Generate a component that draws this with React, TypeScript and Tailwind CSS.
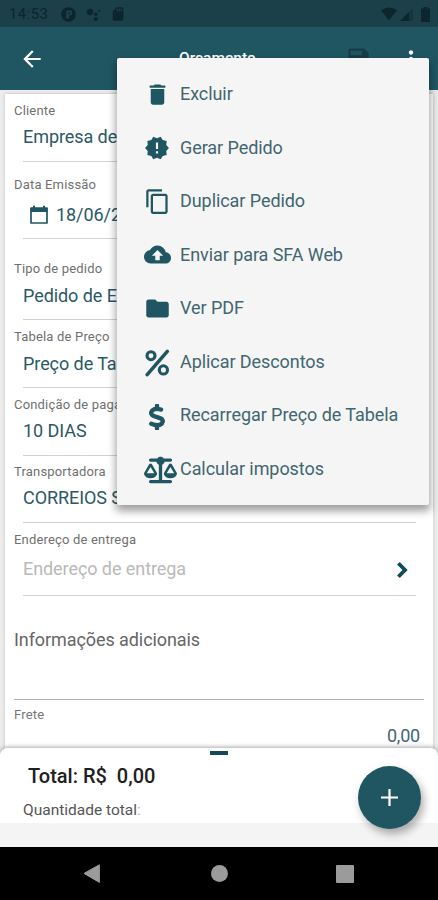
import type { ReactNode } from "react";
import {
  MdArrowBack,
  MdCloudUpload,
  MdContentCopy,
  MdDelete,
  MdFolder,
  MdMoreVert,
  MdNewReleases,
  MdSave,
  MdSdCard,
} from "react-icons/md";
import { FaDollarSign, FaScaleBalanced } from "react-icons/fa6";

function StatusBar() {
  return (
    <div className="flex h-[27px] items-center bg-[#1b4049] pt-px text-[#0d252c]">
      <span className="ml-[9px] w-[40px] text-[15px] leading-none tracking-[0.4px]">14:53</span>
      <svg className="ml-3 size-[15px]" viewBox="0 0 16 16">
        <circle cx="8" cy="8" r="7.8" fill="currentColor" />
        <path d="M5.5 3.8h6.3v5H8.6v3.4H5.5Z" fill="#1b4049" />
        <path d="M7.4 6.2h2.5v1.3H7.4Z" fill="currentColor" />
      </svg>
      <svg className="ml-[10px] size-[15px]" viewBox="0 0 15 15" fill="currentColor">
        <circle cx="4" cy="5" r="3.3" />
        <circle cx="9.8" cy="7.2" r="1.8" />
        <circle cx="9.8" cy="12" r="2.1" />
        <circle cx="13.3" cy="3.8" r="1" />
      </svg>
      <MdSdCard className="ml-[9px] size-4" />
      <svg className="ml-auto h-[14px] w-[16px]" viewBox="0 0 16 14" fill="currentColor">
        <path d="M0 3.2Q8-2.4 16 3.2L8 13.6Z" />
      </svg>
      <svg className="ml-[3px] h-[13px] w-[13px]" viewBox="0 0 13 13" fill="currentColor">
        <path d="M0 13 13 0V13Z" opacity=".35" />
        <path d="M0 13 9 4V13Z" />
      </svg>
      <svg className="ml-2 mr-[8px] h-[15px] w-[9px]" viewBox="0 0 9 15" fill="currentColor">
        <path d="M2.5 0h4v1.5H9V15H0V1.5h2.5Z" />
      </svg>
    </div>
  );
}

function Header() {
  return (
    <div className="flex h-[63px] items-center bg-[#205662] text-white">
      <MdArrowBack className="ml-[19px] size-[26px]" />
      <span className="ml-[134px] pt-px text-[15.5px] leading-none font-medium">Orçamento</span>
      <MdSave className="ml-auto size-[27px] text-[#163d47]" />
      <MdMoreVert className="ml-[26px] mr-[14px] size-[26px]" />
    </div>
  );
}

interface FieldProps {
  label: string;
  frame: string;
  valueClass?: string;
  children: ReactNode;
}

function Field({ label, frame, valueClass = "h-8 text-[#2b5865]", children }: FieldProps) {
  return (
    <div className={`flex flex-col ${frame}`}>
      <span className="h-5 pl-[9px] text-[13px] leading-5 tracking-[0.18px] text-[#707070]">{label}</span>
      <div className={`ml-[18px] flex items-center whitespace-nowrap text-[18px] tracking-[-0.07px] ${valueClass}`}>
        {children}
      </div>
      <div className="mt-auto ml-[18px] mr-[17px] h-px bg-[#d2d2d2]" />
    </div>
  );
}

function CalendarIcon() {
  return (
    <svg className="mt-px ml-[6px] mr-[7px] h-[20px] w-[20px]" viewBox="0 0 20 20">
      <path d="M2 3h16v15H2Z" fill="none" stroke="#205662" strokeWidth="1.7" strokeLinejoin="round" />
      <path d="M1.5 3h17v4h-17ZM4 .8h2V4H4ZM14 .8h2V4h-2Z" fill="#205662" />
    </svg>
  );
}

function PercentIcon() {
  return (
    <svg className="mt-[2px] size-[28px]" viewBox="0 0 28 28" fill="none" stroke="currentColor" strokeWidth="3.1">
      <circle cx="8" cy="6.7" r="4" />
      <circle cx="20.4" cy="20.9" r="4.1" />
      <path d="M24.3 2.3 4.2 25.6" strokeLinecap="round" strokeWidth="3.5" />
    </svg>
  );
}

function MenuItem({ icon, children }: { icon: ReactNode; children: string }) {
  return (
    <div className="flex h-[53.5px] items-center text-[#205662]">
      <div className="ml-[23px] mr-[6px] flex w-[34px] justify-center">{icon}</div>
      <span className="text-[18px] leading-none tracking-[-0.07px] whitespace-nowrap text-[#426670]">{children}</span>
    </div>
  );
}

function OptionsMenu() {
  return (
    <div className="absolute top-[58px] left-[117px] h-[447px] w-[312px] rounded-[2px] bg-[#f5f5f5] pt-[9.6px] shadow-[0_5px_9px_1px_rgba(0,0,0,0.38)]">
      <MenuItem icon={<MdDelete className="size-[27px]" />}>Excluir</MenuItem>
      <MenuItem icon={<MdNewReleases className="size-[26px]" />}>Gerar Pedido</MenuItem>
      <MenuItem icon={<MdContentCopy className="size-[27px]" />}>Duplicar Pedido</MenuItem>
      <MenuItem icon={<MdCloudUpload className="size-[27px]" />}>Enviar para SFA Web</MenuItem>
      <MenuItem icon={<MdFolder className="size-[27px]" />}>Ver PDF</MenuItem>
      <MenuItem icon={<PercentIcon />}>Aplicar Descontos</MenuItem>
      <MenuItem icon={<FaDollarSign className="mt-[3px] size-[26px] [stroke-width:22px]" />}>
        Recarregar Preço de Tabela
      </MenuItem>
      <MenuItem icon={<FaScaleBalanced className="mt-[2px] ml-[6px] h-[28px] w-[33px] shrink-0" />}>
        Calcular impostos
      </MenuItem>
    </div>
  );
}

function OrderForm() {
  return (
    <div className="h-[658px] overflow-hidden bg-[#ececec] px-[5px] pt-1">
      <div className="h-[654px] bg-white shadow-[0_0_3px_rgba(0,0,0,0.2)]">
        <Field label="Cliente" frame="h-[68px] pt-[7px]" valueClass="h-[31px] text-[#2b5865]">
          Empresa de
        </Field>
        <Field label="Data Emissão" frame="h-[77px] pt-[13px]" valueClass="h-[38px] text-[#2b5865]">
          <CalendarIcon />
          18/06/2021
        </Field>
        <Field label="Tipo de pedido" frame="h-[81px] pt-5">Pedido de E</Field>
        <Field label="Tabela de Preço" frame="h-[68px] pt-[7px]">Preço de Tabela</Field>
        <Field label="Condição de pagamento" frame="h-[68px] pt-[7px]" valueClass="h-[30px] text-[#2b5865]">
          10 DIAS
        </Field>
        <Field label="Transportadora" frame="h-[67px] pt-[6px]" valueClass="h-[31px] text-[#2b5865]">
          CORREIOS S
        </Field>
        <Field label="Endereço de entrega" frame="h-[73px] pt-[7px]" valueClass="h-[38px] text-[#b9b9b9]">
          <span className="pb-[2px]">Endereço de entrega</span>
          <svg className="mt-[2px] ml-auto mr-[25px] h-[18px] w-[12px]" viewBox="0 0 12 18">
            <path d="M2.4 2.2 9 9l-6.6 6.8" fill="none" stroke="#124a57" strokeWidth="3.8" />
          </svg>
        </Field>
        <div className="mx-[9px] flex h-[104px] items-center border-b border-[#b2b2b2] pb-[16px] text-[18px] tracking-[-0.08px] text-[#666666]">
          Informações adicionais
        </div>
        <div className="pt-[5px] pl-[9px] pr-[13px]">
          <div className="h-5 text-[13px] leading-5 tracking-[0.18px] text-[#777777]">Frete</div>
          <div className="h-5 pt-px text-right text-[18px] leading-5 tracking-[-0.2px] text-[#426670]">0,00</div>
        </div>
      </div>
    </div>
  );
}

function TotalsPanel() {
  return (
    <div className="relative h-[99px] rounded-t-[8px] bg-[#f4f4f4] shadow-[0_-1px_4px_rgba(0,0,0,0.35)]">
      <div className="flex h-[75px] flex-col rounded-t-[8px] bg-white">
        <div className="mt-[3px] h-1 w-[18px] self-center bg-[#124a57]" />
        <div className="mt-[9px] ml-7 h-6 text-[20px] leading-6 font-medium whitespace-pre text-[#202020]">
          {"Total: R$  0,00"}
        </div>
        <div className="mt-3 ml-[23px] h-5 text-[15.5px] leading-5 text-[#555555]">
          Quantidade total<span className="text-[#b0b0b0]">:</span>
        </div>
      </div>
      <button className="absolute top-[18px] left-[358px] flex size-[63px] items-center justify-center rounded-full bg-[#205662] shadow-[3px_5px_9px_rgba(0,0,0,0.32)]">
        <svg className="size-[17px]" viewBox="0 0 17 17">
          <path d="M8.5 0v17M0 8.5h17" stroke="#ffffff" strokeWidth="2.2" />
        </svg>
      </button>
    </div>
  );
}

function NavigationBar() {
  return (
    <div className="relative flex h-[53px] bg-black">
      <svg className="mt-[17px] ml-[83px] h-[20px] w-[18px]" viewBox="0 0 18 20">
        <path d="M1 9.4 16.4.8v17.6Z" fill="#9b9b9b" stroke="#9b9b9b" strokeLinejoin="round" />
      </svg>
      <div className="mt-[18px] ml-[110px] size-[17px] rounded-full bg-[#9b9b9b]" />
      <div className="mt-[18px] ml-[108px] size-[18px] rounded-[1px] bg-[#9b9b9b]" />
    </div>
  );
}

export default function App() {
  return (
    <div className="relative h-[900px] w-[438px] overflow-hidden bg-[#ececec] font-[Roboto,sans-serif]">
      <StatusBar />
      <Header />
      <OrderForm />
      <TotalsPanel />
      <NavigationBar />
      <OptionsMenu />
    </div>
  );
}
